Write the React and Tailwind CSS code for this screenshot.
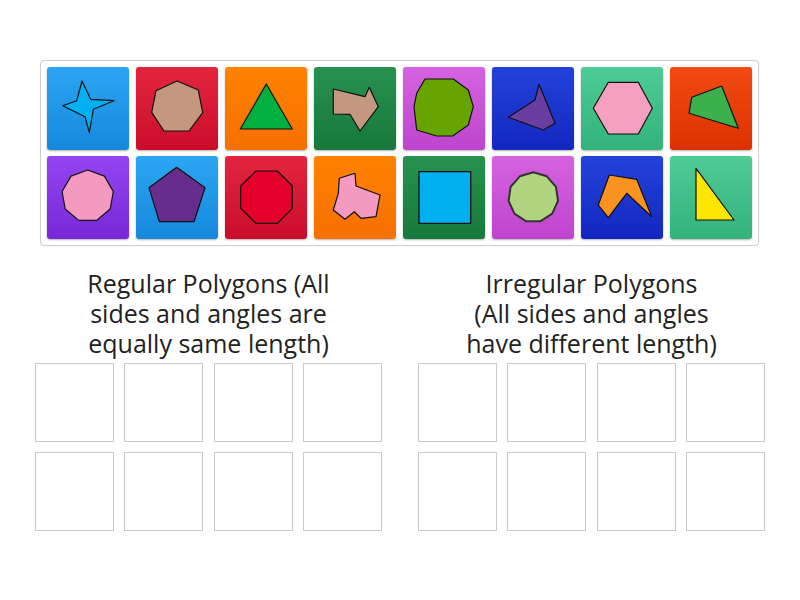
import React from 'react';

// regular polygon points, vertex pointing up
const ngon = (n, cx, cy, r, rot = 0) =>
  Array.from({ length: n }, (_, i) => {
    const a = -Math.PI / 2 + rot + (i * 2 * Math.PI) / n;
    return `${(cx + r * Math.cos(a)).toFixed(1)},${(cy + r * Math.sin(a)).toFixed(1)}`;
  }).join(' ');

const tiles = [
  { bg: 'bg-gradient-to-b from-[#2ba6f2] to-[#1688dc]', fill: '#00b0f0', pts: '35,14 43.7,32.3 67,33.7 46.3,42.3 42.3,65.7 38,49.7 15.7,38.7 29.7,33.7' },
  { bg: 'bg-gradient-to-b from-[#e2253f] to-[#ca0c2b]', fill: '#c4977f', pts: '41,14 62.3,23 66.7,45.7 53,64 28,64 15.7,45.3 20,23.7' },
  { bg: 'bg-gradient-to-b from-[#ff8200] to-[#f66f00]', fill: '#00b140', pts: '41.3,17 67.3,62 15.3,62' },
  { bg: 'bg-gradient-to-b from-[#289150] to-[#15793b]', fill: '#c4977f', pts: '19.3,22 51,29.7 55.3,20.3 64.3,39.7 46,64 36,47.3 19.3,47' },
  { bg: 'bg-gradient-to-b from-[#d563e0] to-[#be44ce]', fill: '#66a500', pts: '22,12 50.3,12 65.3,23 70.3,39.7 65.3,58 49.7,69 33.7,69 13.7,63 11,39.7 13.7,26.3' },
  { bg: 'bg-gradient-to-b from-[#2342da] to-[#1327c0]', fill: '#6a3ea0', pts: '47,17.3 63,56.3 51.3,63 16.3,50.3 43,33' },
  { bg: 'bg-gradient-to-b from-[#4fcc96] to-[#33b27b]', fill: '#f5a0c0', pts: '27.3,15.3 57.3,15.3 71.3,41.3 57.3,67 27.3,67 12.3,41.3' },
  { bg: 'bg-gradient-to-b from-[#f24a12] to-[#dc3100]', fill: '#3cb04a', pts: '21.7,30.3 51.7,19 68.3,61.3 19,46.3' },
  { bg: 'bg-gradient-to-b from-[#9444f2] to-[#7828d6]', fill: '#f49ac0', pts: ngon(9, 40.7, 40, 26) },
  { bg: 'bg-gradient-to-b from-[#2ba6f2] to-[#1688dc]', fill: '#662d8c', pts: '40.7,11.3 69,31.7 58,65.7 23.3,65.7 13,31.7' },
  { bg: 'bg-gradient-to-b from-[#e2253f] to-[#ca0c2b]', fill: '#e4002b', pts: '31,15 52.3,15 67.3,30 67.3,52.3 52.3,67.3 31,67.3 15.7,52.3 15.7,30' },
  { bg: 'bg-gradient-to-b from-[#ff8200] to-[#f66f00]', fill: '#f49ac0', pts: '25.3,22.3 41,17.3 42,30 66,39 62,60.7 47,62.3 40.3,55.7 31,63.3 19.3,54 24.3,37.3' },
  { bg: 'bg-gradient-to-b from-[#289150] to-[#15793b]', fill: '#00b0f0', pts: '16,15.7 67.7,15.7 67.7,67.3 16,67.3', sw: 1.3 },
  { bg: 'bg-gradient-to-b from-[#d563e0] to-[#be44ce]', fill: '#b0d47f', pts: ngon(11, 41.3, 41.3, 25), sw: 2, stroke: '#333' },
  { bg: 'bg-gradient-to-b from-[#2342da] to-[#1327c0]', fill: '#f7931e', pts: '28.3,19 55.7,23.3 70.7,60.7 45.7,37.3 27.3,61.7 17.3,49' },
  { bg: 'bg-gradient-to-b from-[#4fcc96] to-[#33b27b]', fill: '#ffe600', pts: '26,12.3 64,64 26,64' },
];

const Tile = ({ t }) => (
  <div className={`w-[82px] h-[83px] rounded-[3px] shadow-[0_1px_2px_rgba(0,0,0,0.3)] ${t.bg}`}>
    <svg width="82" height="83" viewBox="0 0 82 83">
      <polygon
        points={t.pts}
        fill={t.fill}
        stroke={t.stroke || '#111'}
        strokeWidth={t.sw || 1.2}
        strokeLinejoin="round"
      />
    </svg>
  </div>
);

const Group = ({ lines }) => (
  <div className="w-[347px]">
    <h2 className="text-center text-[25px] leading-[30px] text-[#222] whitespace-nowrap font-['Open_Sans',sans-serif]">
      {lines[0]}
      <br />
      {lines[1]}
      <br />
      {lines[2]}
    </h2>
    <div className="mt-[5px] grid grid-cols-4 gap-[10px]">
      {Array.from({ length: 8 }).map((_, i) => (
        <div key={i} className="w-[79px] h-[79px] border border-[#c8c8c8] bg-white" />
      ))}
    </div>
  </div>
);

export default function App() {
  return (
    <div className="w-[800px] h-[600px] bg-white pt-[60px] font-['Open_Sans',sans-serif]">
      <div className="mx-[40px] w-[719px] rounded-[4px] border border-[#cfcfcf] shadow-[0_0_2px_rgba(0,0,0,0.08)] p-[6px]">
        <div className="grid grid-cols-[repeat(8,82px)] gap-[7px] gap-y-[6px]">
          {tiles.map((t, i) => (
            <Tile key={i} t={t} />
          ))}
        </div>
      </div>
      <div className="mt-[22px] flex gap-[36px] pl-[35px]">
        <Group lines={['Regular Polygons (All', 'sides and angles are', 'equally same length)']} />
        <Group lines={['Irregular Polygons', '(All sides and angles', 'have different length)']} />
      </div>
    </div>
  );
}
